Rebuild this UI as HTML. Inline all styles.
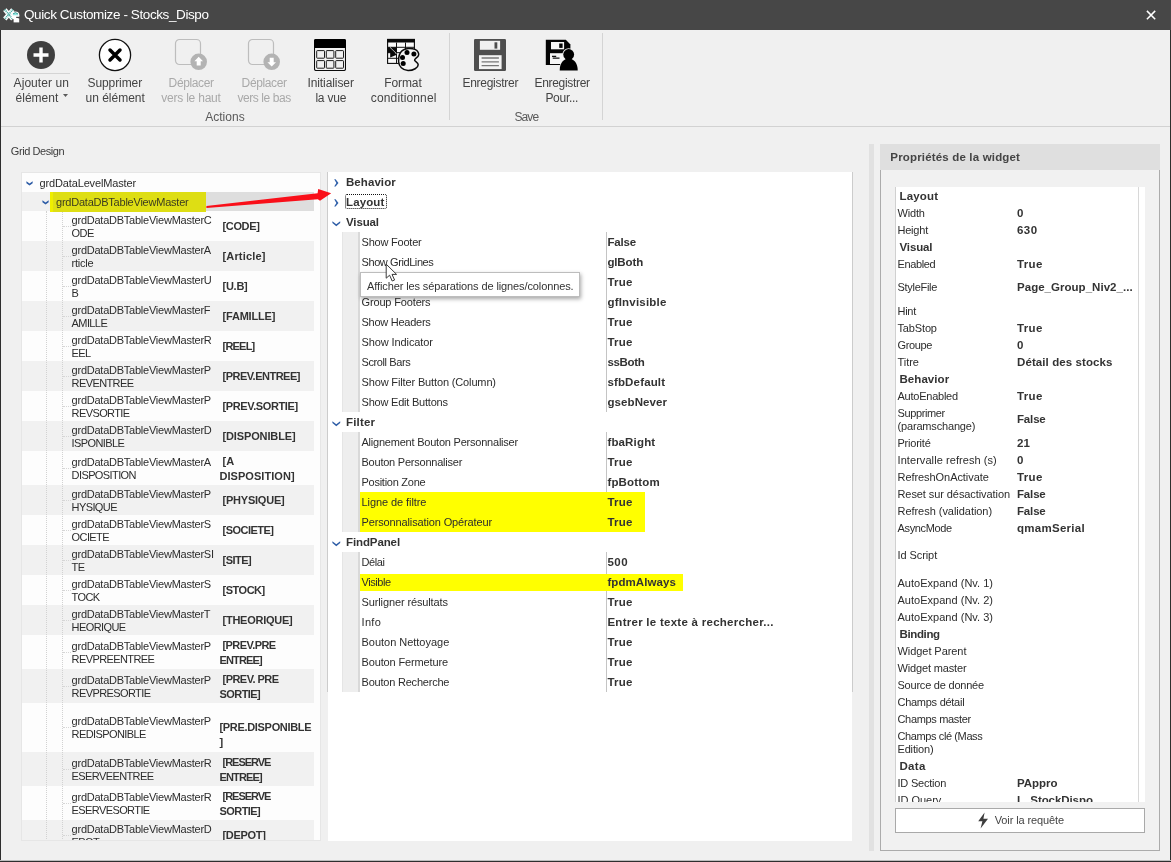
<!DOCTYPE html><html lang="fr"><head><meta charset="utf-8"><title>Quick Customize - Stocks_Dispo</title><style>
*{box-sizing:border-box}
html,body{margin:0;padding:0}
body{width:1171px;height:862px;overflow:hidden;background:#f0f0f0;position:relative;font-family:"Liberation Sans",sans-serif;font-size:11px;color:#2c2c2c}
#app{position:absolute;left:0;top:0;width:1171px;height:862px;will-change:transform}
.abs{position:absolute}
.t{position:absolute;white-space:nowrap;line-height:14px;letter-spacing:-0.2px}
.b{position:absolute;white-space:nowrap;line-height:14px;font-weight:bold;font-size:11.5px;letter-spacing:0.25px;color:#333}
.bu{position:absolute;white-space:nowrap;line-height:14px;font-weight:bold;font-size:11px;letter-spacing:-0.4px;color:#333}
.rb{position:absolute;white-space:nowrap;font-size:12px;line-height:15px;text-align:center;color:#444;transform:translateX(-50%)}
.rb.dis{color:#a9a9a9}
.rb2{position:absolute;white-space:nowrap;font-size:12px;line-height:15px}
.grp{position:absolute;white-space:nowrap;font-size:12px;line-height:15px;color:#5a5a5a;transform:translateX(-50%)}
</style></head><body><div id="app">
<div class="abs" style="left:0px;top:0px;width:1171px;height:30px;background:#474747"></div>
<div class="abs" style="left:24px;top:6px;font-size:13.5px;line-height:18px;letter-spacing:-0.4px;color:#fff;white-space:nowrap">Quick Customize - Stocks_Dispo</div>
<svg class="abs" style="left:2px;top:7px" width="18" height="16" viewBox="0 0 18 16">
<path d="M2.8 2.6 L10.8 12 M10.8 2.6 L2.8 12" stroke="#fff" stroke-width="4.4" fill="none"/>
<path d="M2.8 2.6 L10.8 12 M10.8 2.6 L2.8 12" stroke="#3aa59d" stroke-width="1.9" stroke-dasharray="0.9 0.9" fill="none"/>
<ellipse cx="13.4" cy="8.6" rx="4" ry="4" fill="#fff"/>
<path d="M10.6 8.2 Q13.4 3.6 16.4 8.2Z" fill="#8fe6e2"/>
<path d="M10.9 7 Q13.4 4.2 16 7" stroke="#2f9a92" stroke-width="1" fill="none"/>
<rect x="11.6" y="11.4" width="5.6" height="4" fill="#fff"/>
<rect x="14.2" y="9.8" width="3.4" height="1.2" fill="#474747"/>
</svg>
<svg class="abs" style="left:1145px;top:9px" width="12" height="12" viewBox="0 0 12 12"><path d="M1.9 1.9 L10.2 10.2 M10.2 1.9 L1.9 10.2" stroke="#fff" stroke-width="1.5" fill="none"/></svg>
<div class="abs" style="left:1px;top:126px;width:1169px;height:1px;background:#d2d2d2"></div>
<div class="abs" style="left:449px;top:33px;width:1px;height:87px;background:#d4d4d4"></div>
<div class="abs" style="left:602px;top:33px;width:1px;height:87px;background:#d4d4d4"></div>
<svg class="abs" style="left:26px;top:40px" width="30" height="30" viewBox="0 0 30 30"><circle cx="15" cy="15" r="14" fill="#3f3f3f"/><path d="M15 7.5V22.5M7.5 15H22.5" stroke="#fff" stroke-width="3.4"/></svg>
<div class="abs" style="left:11px;top:73px;width:59px;height:1px;background:#d4d4d4"></div>
<div class="rb2" style="left:13.6px;top:75.5px;letter-spacing:0.06px;color:#444">Ajouter un</div>
<div class="rb2" style="left:15.6px;top:91px;letter-spacing:0.00px;color:#444">élément</div>
<svg class="abs" style="left:62.5px;top:94px" width="5" height="3" viewBox="0 0 5 3"><path d="M0 0H5L2.5 3Z" fill="#5a5a5a"/></svg>
<svg class="abs" style="left:98px;top:38px" width="34" height="34" viewBox="0 0 34 34"><circle cx="17" cy="17" r="15.6" fill="#fff" stroke="#111" stroke-width="1.3"/><path d="M12 12L22 22M22 12L12 22" stroke="#000" stroke-width="3.5" stroke-linecap="round"/></svg>
<div class="rb2" style="left:87.5px;top:75.5px;letter-spacing:-0.09px;color:#444">Supprimer</div>
<div class="rb2" style="left:85.6px;top:91px;letter-spacing:-0.02px;color:#444">un élément</div>
<svg class="abs" style="left:174px;top:38px" width="36" height="34" viewBox="0 0 36 34"><rect x="1.5" y="1.5" width="25" height="25" rx="4" fill="#f0f0f0" stroke="#bdbdbd" stroke-width="1.2"/><circle cx="24.7" cy="23.8" r="8.3" fill="#b3b3b3"/><path d="M24.7 18.8 L29 23.2 H26.7 V27.6 H22.7 V23.2 H20.4Z" fill="#fff"/></svg>
<div class="rb2" style="left:168.6px;top:75.5px;letter-spacing:-0.37px;color:#a9a9a9">Déplacer</div>
<div class="rb2" style="left:161.2px;top:91px;letter-spacing:-0.21px;color:#a9a9a9">vers le haut</div>
<svg class="abs" style="left:247px;top:38px" width="36" height="34" viewBox="0 0 36 34"><rect x="1.5" y="1.5" width="25" height="25" rx="4" fill="#f0f0f0" stroke="#bdbdbd" stroke-width="1.2"/><circle cx="24.7" cy="23.8" r="8.3" fill="#b3b3b3"/><path d="M24.7 28.6 L29 24.2 H26.7 V19.8 H22.7 V24.2 H20.4Z" fill="#fff"/></svg>
<div class="rb2" style="left:241.6px;top:75.5px;letter-spacing:-0.37px;color:#a9a9a9">Déplacer</div>
<div class="rb2" style="left:237.4px;top:91px;letter-spacing:-0.41px;color:#a9a9a9">vers le bas</div>
<svg class="abs" style="left:314px;top:39px" width="32" height="32" viewBox="0 0 32 32"><rect x="0.5" y="0.5" width="31" height="31" rx="1.6" fill="#f4f4f4" stroke="#0a0a0a" stroke-width="1.1"/>
<path d="M0 2 Q0 0 2 0 H30 Q32 0 32 2 V9 H0Z" fill="#000"/>
<g fill="#f1f1f1" stroke="#1c1c1c" stroke-width="1"><rect x="2.7" y="11.6" width="7.8" height="7.6" rx="0.6"/><rect x="12.3" y="11.6" width="7.6" height="7.6" rx="0.6"/><rect x="21.7" y="11.6" width="7.8" height="7.6" rx="0.6"/><rect x="2.7" y="21.6" width="7.8" height="7.6" rx="0.6"/><rect x="12.3" y="21.6" width="7.6" height="7.6" rx="0.6"/><rect x="21.7" y="21.6" width="7.8" height="7.6" rx="0.6"/></g></svg>
<div class="rb2" style="left:307.4px;top:75.5px;letter-spacing:-0.08px;color:#444">Initialiser</div>
<div class="rb2" style="left:315.4px;top:91px;letter-spacing:-0.22px;color:#444">la vue</div>
<svg class="abs" style="left:386px;top:38px" width="36" height="34" viewBox="0 0 36 34">
<rect x="1.6" y="1.4" width="26.8" height="24" fill="#fafafa" stroke="#0a0a0a" stroke-width="1.1"/>
<rect x="1.1" y="0.9" width="27.8" height="3.6" rx="0.8" fill="#0a0a0a"/>
<path d="M1.6 9.3H28.4M1.6 14.7H28.4M1.6 20.3H28.4M10.5 4.5V25.4M19.5 4.5V25.4" stroke="#111" stroke-width="1"/>
<rect x="1.6" y="9.3" width="8.9" height="5.4" fill="#0a0a0a"/>
<path d="M4.2 10 L10.8 16.8 L4.2 19.4Z" fill="#0a0a0a"/>
<path d="M4 9.3 L10.5 15.6" stroke="#fff" stroke-width="0.7"/>
<path d="M16.2 12.6 C19 10.4 25 9.8 29 11.4 C32 12.8 33.4 15.6 32.4 17.6 C31.4 19.6 28.4 20.6 28.6 22.2 C28.8 23.8 32.2 24.4 32.2 26.8 C32.2 29.6 27.5 32.6 22 32.5 C16.5 32.4 12.8 28.5 12.6 23.5 C12.4 19 13.6 14.8 16.2 12.6Z" fill="#f3f3f3" stroke="#0a0a0a" stroke-width="1.5"/>
<circle cx="21" cy="14.6" r="2.5" fill="#000"/><circle cx="27.9" cy="16" r="2.5" fill="#000"/><circle cx="16.5" cy="19.5" r="2.5" fill="#000"/><circle cx="17.2" cy="25.6" r="2.5" fill="#000"/>
</svg>
<div class="rb2" style="left:384.2px;top:75.5px;letter-spacing:-0.08px;color:#444">Format</div>
<div class="rb2" style="left:370.8px;top:91px;letter-spacing:0.14px;color:#444">conditionnel</div>
<div class="rb2" style="left:205.2px;top:109.5px;letter-spacing:0.02px;color:#5a5a5a">Actions</div>
<svg class="abs" style="left:474px;top:39px" width="32" height="32" viewBox="0 0 32 32"><rect width="32" height="31.9" rx="1.2" fill="#4e4e4e"/><rect x="5.9" y="1.8" width="20.2" height="9" fill="#f1f1f1"/><rect x="20.5" y="3.3" width="2.8" height="6.3" fill="#4e4e4e"/><rect x="5" y="16.2" width="22.6" height="13.9" fill="#f4f4f4"/><path d="M7.6 19H24.9M7.6 22.9H24.9M7.6 26.6H24.9" stroke="#777" stroke-width="1.4"/></svg>
<div class="rb2" style="left:462.5px;top:75.5px;letter-spacing:-0.28px;color:#444">Enregistrer</div>
<svg class="abs" style="left:545px;top:39px" width="34" height="33" viewBox="0 0 34 33">
<path d="M0.8 0.8 H20.8 L25.4 5.5 V25.9 H0.8Z" fill="#050505"/>
<rect x="6" y="3" width="13.1" height="7.3" fill="#f6f6f6"/><rect x="14.2" y="4.5" width="3.4" height="4.4" fill="#050505"/>
<rect x="5" y="14.2" width="15" height="10.8" fill="#f6f6f6"/><path d="M7 17.4H11.2M7.7 19.1H14.5" stroke="#111" stroke-width="1.3"/>
<circle cx="23.7" cy="15.5" r="6.3" fill="#f0f0f0"/>
<path d="M13.6 32.5 C13.6 25.5 17.2 20 23.7 20 C30.2 20 33.8 25.5 33.8 32.5Z" fill="#f0f0f0"/>
<circle cx="23.7" cy="15.5" r="5.4" fill="#000"/>
<path d="M14.7 31.5 C14.7 24 18.5 19.8 23.7 19.8 C28.9 19.8 32.7 24 32.7 31.5Z" fill="#000"/><rect x="20.6" y="17" width="6.2" height="5" fill="#000"/>
</svg>
<div class="rb2" style="left:534.5px;top:75.5px;letter-spacing:-0.31px;color:#444">Enregistrer</div>
<div class="rb2" style="left:545.4px;top:91px;letter-spacing:-0.27px;color:#444">Pour...</div>
<div class="rb2" style="left:514.4px;top:109.5px;letter-spacing:-0.89px;color:#5a5a5a">Save</div>
<div class="t" style="left:10.8px;top:144px;letter-spacing:-0.43px;color:#3c3c3c">Grid Design</div>
<div class="abs" style="left:21px;top:172px;width:300px;height:669px;background:#fdfdfd;border:1px solid #e6e6e6"></div>
<div class="abs" style="left:22px;top:173px;width:298px;height:667px;overflow:hidden">
<div class="abs" style="left:0px;top:19px;width:292px;height:19px;background:#f0f0f0"></div>
<div class="abs" style="left:31px;top:19px;width:261px;height:19px;background:#dedede"></div>
<div class="abs" style="left:0px;top:68px;width:292px;height:30px;background:#f1f1f1"></div>
<div class="abs" style="left:0px;top:128px;width:292px;height:30px;background:#f1f1f1"></div>
<div class="abs" style="left:0px;top:188px;width:292px;height:30px;background:#f1f1f1"></div>
<div class="abs" style="left:0px;top:248px;width:292px;height:30px;background:#f1f1f1"></div>
<div class="abs" style="left:0px;top:312px;width:292px;height:30px;background:#f1f1f1"></div>
<div class="abs" style="left:0px;top:372px;width:292px;height:30px;background:#f1f1f1"></div>
<div class="abs" style="left:0px;top:432px;width:292px;height:30px;background:#f1f1f1"></div>
<div class="abs" style="left:0px;top:496px;width:292px;height:34px;background:#f1f1f1"></div>
<div class="abs" style="left:0px;top:579px;width:292px;height:34px;background:#f1f1f1"></div>
<div class="abs" style="left:0px;top:647px;width:292px;height:30px;background:#f1f1f1"></div>
<div class="abs" style="left:24px;top:38px;width:1px;height:640px;border-left:1px dotted #d2d2d2"></div>
<div class="abs" style="left:40px;top:38px;width:1px;height:640px;border-left:1px dotted #d2d2d2"></div>
<svg class="abs" style="left:4.300000000000001px;top:8.199999999999989px" width="7.4" height="4.8" viewBox="0 0 9 6"><path d="M0.4 0.4 L4.3 3.2 L8.2 0.4 V2.8 L4.3 5.6 L0.4 2.8Z" fill="#2d5ca6"/></svg>
<svg class="abs" style="left:20px;top:27.400000000000006px" width="7.4" height="4.8" viewBox="0 0 9 6"><path d="M0.4 0.4 L4.3 3.2 L8.2 0.4 V2.8 L4.3 5.6 L0.4 2.8Z" fill="#2d5ca6"/></svg>
<div class="t" style="left:17.5px;top:3px;letter-spacing:-0.14px;">grdDataLevelMaster</div>
<div class="abs" style="left:28px;top:19px;width:156px;height:19.5px;background:#dede14"></div>
<div class="abs" style="left:28px;top:19px;width:3px;height:19.5px;background:#eeee00"></div>
<div class="t" style="left:34px;top:22px;letter-spacing:-0.23px;color:#3c3c20">grdDataDBTableViewMaster</div>
<div class="abs" style="left:41px;top:53px;width:8px;height:1px;border-top:1px dotted #d6d6d6"></div>
<div class="t" style="left:49.599999999999994px;top:40px;letter-spacing:-0.24px">grdDataDBTableViewMasterC</div>
<div class="t" style="left:49.599999999999994px;top:52.5px;letter-spacing:-0.6px">ODE</div>
<div class="bu" style="left:200.5px;top:46px;letter-spacing:-0.35px;">[CODE]</div>
<div class="abs" style="left:41px;top:83px;width:8px;height:1px;border-top:1px dotted #d6d6d6"></div>
<div class="t" style="left:49.599999999999994px;top:70px;letter-spacing:-0.24px">grdDataDBTableViewMasterA</div>
<div class="t" style="left:49.599999999999994px;top:82.5px;letter-spacing:-0.24px">rticle</div>
<div class="bu" style="left:200.5px;top:76px;letter-spacing:0.16px;">[Article]</div>
<div class="abs" style="left:41px;top:113px;width:8px;height:1px;border-top:1px dotted #d6d6d6"></div>
<div class="t" style="left:49.599999999999994px;top:100px;letter-spacing:-0.24px">grdDataDBTableViewMasterU</div>
<div class="t" style="left:49.599999999999994px;top:112.5px;letter-spacing:-0.6px">B</div>
<div class="bu" style="left:200.5px;top:106px;letter-spacing:-0.25px;">[U.B]</div>
<div class="abs" style="left:41px;top:143px;width:8px;height:1px;border-top:1px dotted #d6d6d6"></div>
<div class="t" style="left:49.599999999999994px;top:130px;letter-spacing:-0.24px">grdDataDBTableViewMasterF</div>
<div class="t" style="left:49.599999999999994px;top:142.5px;letter-spacing:-0.6px">AMILLE</div>
<div class="bu" style="left:200.5px;top:136px;letter-spacing:-0.19px;">[FAMILLE]</div>
<div class="abs" style="left:41px;top:173px;width:8px;height:1px;border-top:1px dotted #d6d6d6"></div>
<div class="t" style="left:49.599999999999994px;top:160px;letter-spacing:-0.24px">grdDataDBTableViewMasterR</div>
<div class="t" style="left:49.599999999999994px;top:172.5px;letter-spacing:-0.6px">EEL</div>
<div class="bu" style="left:200.5px;top:166px;letter-spacing:-0.78px;">[REEL]</div>
<div class="abs" style="left:41px;top:203px;width:8px;height:1px;border-top:1px dotted #d6d6d6"></div>
<div class="t" style="left:49.599999999999994px;top:190px;letter-spacing:-0.24px">grdDataDBTableViewMasterP</div>
<div class="t" style="left:49.599999999999994px;top:202.5px;letter-spacing:-0.6px">REVENTREE</div>
<div class="bu" style="left:200.5px;top:196px;letter-spacing:-0.50px;">[PREV.ENTREE]</div>
<div class="abs" style="left:41px;top:233px;width:8px;height:1px;border-top:1px dotted #d6d6d6"></div>
<div class="t" style="left:49.599999999999994px;top:220px;letter-spacing:-0.24px">grdDataDBTableViewMasterP</div>
<div class="t" style="left:49.599999999999994px;top:232.5px;letter-spacing:-0.6px">REVSORTIE</div>
<div class="bu" style="left:200.5px;top:226px;letter-spacing:-0.39px;">[PREV.SORTIE]</div>
<div class="abs" style="left:41px;top:263px;width:8px;height:1px;border-top:1px dotted #d6d6d6"></div>
<div class="t" style="left:49.599999999999994px;top:250px;letter-spacing:-0.24px">grdDataDBTableViewMasterD</div>
<div class="t" style="left:49.599999999999994px;top:262.5px;letter-spacing:-0.6px">ISPONIBLE</div>
<div class="bu" style="left:200.5px;top:256px;letter-spacing:-0.13px;">[DISPONIBLE]</div>
<div class="abs" style="left:41px;top:295px;width:8px;height:1px;border-top:1px dotted #d6d6d6"></div>
<div class="t" style="left:49.599999999999994px;top:282px;letter-spacing:-0.24px">grdDataDBTableViewMasterA</div>
<div class="t" style="left:49.599999999999994px;top:294.5px;letter-spacing:-0.6px">DISPOSITION</div>
<div class="bu" style="left:200.5px;top:281px;letter-spacing:-0.00px;">[A</div>
<div class="bu" style="left:197.5px;top:296px;letter-spacing:0.05px;">DISPOSITION]</div>
<div class="abs" style="left:41px;top:327px;width:8px;height:1px;border-top:1px dotted #d6d6d6"></div>
<div class="t" style="left:49.599999999999994px;top:314px;letter-spacing:-0.24px">grdDataDBTableViewMasterP</div>
<div class="t" style="left:49.599999999999994px;top:326.5px;letter-spacing:-0.6px">HYSIQUE</div>
<div class="bu" style="left:200.5px;top:320px;letter-spacing:-0.22px;">[PHYSIQUE]</div>
<div class="abs" style="left:41px;top:357px;width:8px;height:1px;border-top:1px dotted #d6d6d6"></div>
<div class="t" style="left:49.599999999999994px;top:344px;letter-spacing:-0.24px">grdDataDBTableViewMasterS</div>
<div class="t" style="left:49.599999999999994px;top:356.5px;letter-spacing:-0.6px">OCIETE</div>
<div class="bu" style="left:200.5px;top:350px;letter-spacing:-0.51px;">[SOCIETE]</div>
<div class="abs" style="left:41px;top:387px;width:8px;height:1px;border-top:1px dotted #d6d6d6"></div>
<div class="t" style="left:49.599999999999994px;top:374px;letter-spacing:-0.24px">grdDataDBTableViewMasterSI</div>
<div class="t" style="left:49.599999999999994px;top:386.5px;letter-spacing:-0.6px">TE</div>
<div class="bu" style="left:200.5px;top:380px;letter-spacing:-0.50px;">[SITE]</div>
<div class="abs" style="left:41px;top:417px;width:8px;height:1px;border-top:1px dotted #d6d6d6"></div>
<div class="t" style="left:49.599999999999994px;top:404px;letter-spacing:-0.24px">grdDataDBTableViewMasterS</div>
<div class="t" style="left:49.599999999999994px;top:416.5px;letter-spacing:-0.6px">TOCK</div>
<div class="bu" style="left:200.5px;top:410px;letter-spacing:-0.48px;">[STOCK]</div>
<div class="abs" style="left:41px;top:447px;width:8px;height:1px;border-top:1px dotted #d6d6d6"></div>
<div class="t" style="left:49.599999999999994px;top:434px;letter-spacing:-0.24px">grdDataDBTableViewMasterT</div>
<div class="t" style="left:49.599999999999994px;top:446.5px;letter-spacing:-0.6px">HEORIQUE</div>
<div class="bu" style="left:200.5px;top:440px;letter-spacing:-0.25px;">[THEORIQUE]</div>
<div class="abs" style="left:41px;top:479px;width:8px;height:1px;border-top:1px dotted #d6d6d6"></div>
<div class="t" style="left:49.599999999999994px;top:466px;letter-spacing:-0.24px">grdDataDBTableViewMasterP</div>
<div class="t" style="left:49.599999999999994px;top:478.5px;letter-spacing:-0.6px">REVPREENTREE</div>
<div class="bu" style="left:200.5px;top:465px;letter-spacing:-0.58px;">[PREV.PRE</div>
<div class="bu" style="left:197.5px;top:480px;letter-spacing:-0.84px;">ENTREE]</div>
<div class="abs" style="left:41px;top:513px;width:8px;height:1px;border-top:1px dotted #d6d6d6"></div>
<div class="t" style="left:49.599999999999994px;top:500px;letter-spacing:-0.24px">grdDataDBTableViewMasterP</div>
<div class="t" style="left:49.599999999999994px;top:512.5px;letter-spacing:-0.6px">REVPRESORTIE</div>
<div class="bu" style="left:200.5px;top:499px;letter-spacing:-0.53px;">[PREV. PRE</div>
<div class="bu" style="left:197.5px;top:514px;letter-spacing:-0.57px;">SORTIE]</div>
<div class="abs" style="left:41px;top:554px;width:8px;height:1px;border-top:1px dotted #d6d6d6"></div>
<div class="t" style="left:49.599999999999994px;top:541px;letter-spacing:-0.24px">grdDataDBTableViewMasterP</div>
<div class="t" style="left:49.599999999999994px;top:553.5px;letter-spacing:-0.6px">REDISPONIBLE</div>
<div class="bu" style="left:197.5px;top:547px;letter-spacing:-0.32px;">[PRE.DISPONIBLE</div>
<div class="bu" style="left:197.5px;top:562px;letter-spacing:-0.26px;">]</div>
<div class="abs" style="left:41px;top:596px;width:8px;height:1px;border-top:1px dotted #d6d6d6"></div>
<div class="t" style="left:49.599999999999994px;top:583px;letter-spacing:-0.24px">grdDataDBTableViewMasterR</div>
<div class="t" style="left:49.599999999999994px;top:595.5px;letter-spacing:-0.6px">ESERVEENTREE</div>
<div class="bu" style="left:200.5px;top:582px;letter-spacing:-1.02px;">[RESERVE</div>
<div class="bu" style="left:197.5px;top:597px;letter-spacing:-0.84px;">ENTREE]</div>
<div class="abs" style="left:41px;top:630px;width:8px;height:1px;border-top:1px dotted #d6d6d6"></div>
<div class="t" style="left:49.599999999999994px;top:617px;letter-spacing:-0.24px">grdDataDBTableViewMasterR</div>
<div class="t" style="left:49.599999999999994px;top:629.5px;letter-spacing:-0.6px">ESERVESORTIE</div>
<div class="bu" style="left:200.5px;top:616px;letter-spacing:-1.02px;">[RESERVE</div>
<div class="bu" style="left:197.5px;top:631px;letter-spacing:-0.57px;">SORTIE]</div>
<div class="abs" style="left:41px;top:662px;width:8px;height:1px;border-top:1px dotted #d6d6d6"></div>
<div class="t" style="left:49.599999999999994px;top:649px;letter-spacing:-0.24px">grdDataDBTableViewMasterD</div>
<div class="t" style="left:49.599999999999994px;top:661.5px;letter-spacing:-0.6px">EPOT</div>
<div class="bu" style="left:200.5px;top:655px;letter-spacing:-0.32px;">[DEPOT]</div>
</div>
<div class="abs" style="left:328px;top:172px;width:524px;height:669px;background:#fff"></div>
<div class="abs" style="left:327px;top:172px;width:526px;height:520px;border-left:1px solid #cccccc;border-right:1px solid #cccccc"></div>
<svg class="abs" style="left:334.2px;top:178.9px" width="5.4" height="8.1" viewBox="0 0 6 9"><path d="M0.2 0.4 H1.8 L5 4.4 L1.8 8.4 H0.2 L2.6 4.4Z" fill="#3262ab"/></svg>
<div class="b" style="left:346px;top:175px;letter-spacing:0.07px;">Behavior</div>
<svg class="abs" style="left:334.2px;top:198.9px" width="5.4" height="8.1" viewBox="0 0 6 9"><path d="M0.2 0.4 H1.8 L5 4.4 L1.8 8.4 H0.2 L2.6 4.4Z" fill="#3262ab"/></svg>
<div class="b" style="left:346px;top:195px;letter-spacing:0.13px;">Layout</div>
<div class="abs" style="left:345px;top:194px;width:42px;height:15px;border:1px dotted #111;border-radius:2px"></div>
<svg class="abs" style="left:332px;top:221px" width="9" height="6" viewBox="0 0 9 6"><path d="M0.4 0.3 L4.3 3.2 L8.2 0.3 V2 L4.3 5.2 L0.4 2Z" fill="#2d5ca6"/></svg>
<div class="b" style="left:346px;top:215px;letter-spacing:-0.13px;">Visual</div>
<div class="abs" style="left:342px;top:232px;width:18px;height:20px;background:#eeeeee;border-left:1px solid #e5e5e5;border-right:2px solid #d9d9d9"></div>
<div class="abs" style="left:606px;top:232px;width:1px;height:20px;background:#c4c4c4"></div>
<div class="t" style="left:361.5px;top:235px;letter-spacing:-0.21px;">Show Footer</div>
<div class="b" style="left:607.4px;top:235px;letter-spacing:-0.14px;">False</div>
<div class="abs" style="left:342px;top:252px;width:18px;height:20px;background:#eeeeee;border-left:1px solid #e5e5e5;border-right:2px solid #d9d9d9"></div>
<div class="abs" style="left:606px;top:252px;width:1px;height:20px;background:#c4c4c4"></div>
<div class="t" style="left:361.5px;top:255px;letter-spacing:-0.41px;">Show GridLines</div>
<div class="b" style="left:607.4px;top:255px;letter-spacing:-0.12px;">glBoth</div>
<div class="abs" style="left:342px;top:272px;width:18px;height:20px;background:#eeeeee;border-left:1px solid #e5e5e5;border-right:2px solid #d9d9d9"></div>
<div class="abs" style="left:606px;top:272px;width:1px;height:20px;background:#c4c4c4"></div>
<div class="b" style="left:607.4px;top:275px;letter-spacing:0.28px;">True</div>
<div class="abs" style="left:342px;top:292px;width:18px;height:20px;background:#eeeeee;border-left:1px solid #e5e5e5;border-right:2px solid #d9d9d9"></div>
<div class="abs" style="left:606px;top:292px;width:1px;height:20px;background:#c4c4c4"></div>
<div class="t" style="left:361.5px;top:295px;letter-spacing:-0.15px;">Group Footers</div>
<div class="b" style="left:607.4px;top:295px;letter-spacing:0.21px;">gfInvisible</div>
<div class="abs" style="left:342px;top:312px;width:18px;height:20px;background:#eeeeee;border-left:1px solid #e5e5e5;border-right:2px solid #d9d9d9"></div>
<div class="abs" style="left:606px;top:312px;width:1px;height:20px;background:#c4c4c4"></div>
<div class="t" style="left:361.5px;top:315px;letter-spacing:-0.26px;">Show Headers</div>
<div class="b" style="left:607.4px;top:315px;letter-spacing:0.28px;">True</div>
<div class="abs" style="left:342px;top:332px;width:18px;height:20px;background:#eeeeee;border-left:1px solid #e5e5e5;border-right:2px solid #d9d9d9"></div>
<div class="abs" style="left:606px;top:332px;width:1px;height:20px;background:#c4c4c4"></div>
<div class="t" style="left:361.5px;top:335px;letter-spacing:-0.10px;">Show Indicator</div>
<div class="b" style="left:607.4px;top:335px;letter-spacing:0.28px;">True</div>
<div class="abs" style="left:342px;top:352px;width:18px;height:20px;background:#eeeeee;border-left:1px solid #e5e5e5;border-right:2px solid #d9d9d9"></div>
<div class="abs" style="left:606px;top:352px;width:1px;height:20px;background:#c4c4c4"></div>
<div class="t" style="left:361.5px;top:355px;letter-spacing:-0.39px;">Scroll Bars</div>
<div class="b" style="left:607.4px;top:355px;letter-spacing:-0.31px;">ssBoth</div>
<div class="abs" style="left:342px;top:372px;width:18px;height:20px;background:#eeeeee;border-left:1px solid #e5e5e5;border-right:2px solid #d9d9d9"></div>
<div class="abs" style="left:606px;top:372px;width:1px;height:20px;background:#c4c4c4"></div>
<div class="t" style="left:361.5px;top:375px;letter-spacing:-0.14px;">Show Filter Button (Column)</div>
<div class="b" style="left:607.4px;top:375px;letter-spacing:0.16px;">sfbDefault</div>
<div class="abs" style="left:342px;top:392px;width:18px;height:20px;background:#eeeeee;border-left:1px solid #e5e5e5;border-right:2px solid #d9d9d9"></div>
<div class="abs" style="left:606px;top:392px;width:1px;height:20px;background:#c4c4c4"></div>
<div class="t" style="left:361.5px;top:395px;letter-spacing:-0.21px;">Show Edit Buttons</div>
<div class="b" style="left:607.4px;top:395px;letter-spacing:0.10px;">gsebNever</div>
<svg class="abs" style="left:332px;top:421px" width="9" height="6" viewBox="0 0 9 6"><path d="M0.4 0.3 L4.3 3.2 L8.2 0.3 V2 L4.3 5.2 L0.4 2Z" fill="#2d5ca6"/></svg>
<div class="b" style="left:346px;top:415px;letter-spacing:0.16px;">Filter</div>
<div class="abs" style="left:342px;top:432px;width:18px;height:20px;background:#eeeeee;border-left:1px solid #e5e5e5;border-right:2px solid #d9d9d9"></div>
<div class="abs" style="left:606px;top:432px;width:1px;height:20px;background:#c4c4c4"></div>
<div class="t" style="left:361.5px;top:435px;letter-spacing:-0.22px;">Alignement Bouton Personnaliser</div>
<div class="b" style="left:607.4px;top:435px;letter-spacing:0.16px;">fbaRight</div>
<div class="abs" style="left:342px;top:452px;width:18px;height:20px;background:#eeeeee;border-left:1px solid #e5e5e5;border-right:2px solid #d9d9d9"></div>
<div class="abs" style="left:606px;top:452px;width:1px;height:20px;background:#c4c4c4"></div>
<div class="t" style="left:361.5px;top:455px;letter-spacing:-0.23px;">Bouton Personnaliser</div>
<div class="b" style="left:607.4px;top:455px;letter-spacing:0.28px;">True</div>
<div class="abs" style="left:342px;top:472px;width:18px;height:20px;background:#eeeeee;border-left:1px solid #e5e5e5;border-right:2px solid #d9d9d9"></div>
<div class="abs" style="left:606px;top:472px;width:1px;height:20px;background:#c4c4c4"></div>
<div class="t" style="left:361.5px;top:475px;letter-spacing:-0.26px;">Position Zone</div>
<div class="b" style="left:607.4px;top:475px;letter-spacing:0.19px;">fpBottom</div>
<div class="abs" style="left:342px;top:492px;width:18px;height:20px;background:#eeeeee;border-left:1px solid #e5e5e5;border-right:2px solid #d9d9d9"></div>
<div class="abs" style="left:606px;top:492px;width:1px;height:20px;background:#c4c4c4"></div>
<div class="abs" style="left:360px;top:492px;width:285px;height:20px;background:#ffff00"></div>
<div class="t" style="left:361.5px;top:495px;letter-spacing:-0.08px;">Ligne de filtre</div>
<div class="b" style="left:607.4px;top:495px;letter-spacing:0.28px;">True</div>
<div class="abs" style="left:342px;top:512px;width:18px;height:20px;background:#eeeeee;border-left:1px solid #e5e5e5;border-right:2px solid #d9d9d9"></div>
<div class="abs" style="left:606px;top:512px;width:1px;height:20px;background:#c4c4c4"></div>
<div class="abs" style="left:360px;top:512px;width:285px;height:20px;background:#ffff00"></div>
<div class="t" style="left:361.5px;top:515px;letter-spacing:-0.13px;">Personnalisation Opérateur</div>
<div class="b" style="left:607.4px;top:515px;letter-spacing:0.28px;">True</div>
<svg class="abs" style="left:332px;top:541px" width="9" height="6" viewBox="0 0 9 6"><path d="M0.4 0.3 L4.3 3.2 L8.2 0.3 V2 L4.3 5.2 L0.4 2Z" fill="#2d5ca6"/></svg>
<div class="b" style="left:346px;top:535px;letter-spacing:-0.11px;">FindPanel</div>
<div class="abs" style="left:342px;top:552px;width:18px;height:20px;background:#eeeeee;border-left:1px solid #e5e5e5;border-right:2px solid #d9d9d9"></div>
<div class="abs" style="left:606px;top:552px;width:1px;height:20px;background:#c4c4c4"></div>
<div class="t" style="left:361.5px;top:555px;letter-spacing:-0.41px;">Délai</div>
<div class="b" style="left:607.4px;top:555px;letter-spacing:0.50px;">500</div>
<div class="abs" style="left:342px;top:572px;width:18px;height:20px;background:#eeeeee;border-left:1px solid #e5e5e5;border-right:2px solid #d9d9d9"></div>
<div class="abs" style="left:606px;top:572px;width:1px;height:20px;background:#c4c4c4"></div>
<div class="abs" style="left:360px;top:574px;width:323px;height:17px;background:#ffff00"></div>
<div class="t" style="left:361.5px;top:575px;letter-spacing:-0.44px;">Visible</div>
<div class="b" style="left:607.4px;top:575px;letter-spacing:0.09px;">fpdmAlways</div>
<div class="abs" style="left:342px;top:592px;width:18px;height:20px;background:#eeeeee;border-left:1px solid #e5e5e5;border-right:2px solid #d9d9d9"></div>
<div class="abs" style="left:606px;top:592px;width:1px;height:20px;background:#c4c4c4"></div>
<div class="t" style="left:361.5px;top:595px;letter-spacing:-0.12px;">Surligner résultats</div>
<div class="b" style="left:607.4px;top:595px;letter-spacing:0.28px;">True</div>
<div class="abs" style="left:342px;top:612px;width:18px;height:20px;background:#eeeeee;border-left:1px solid #e5e5e5;border-right:2px solid #d9d9d9"></div>
<div class="abs" style="left:606px;top:612px;width:1px;height:20px;background:#c4c4c4"></div>
<div class="t" style="left:361.5px;top:615px;letter-spacing:0.34px;">Info</div>
<div class="b" style="left:607.4px;top:615px;letter-spacing:0.27px;">Entrer le texte à rechercher...</div>
<div class="abs" style="left:342px;top:632px;width:18px;height:20px;background:#eeeeee;border-left:1px solid #e5e5e5;border-right:2px solid #d9d9d9"></div>
<div class="abs" style="left:606px;top:632px;width:1px;height:20px;background:#c4c4c4"></div>
<div class="t" style="left:361.5px;top:635px;letter-spacing:-0.02px;">Bouton Nettoyage</div>
<div class="b" style="left:607.4px;top:635px;letter-spacing:0.28px;">True</div>
<div class="abs" style="left:342px;top:652px;width:18px;height:20px;background:#eeeeee;border-left:1px solid #e5e5e5;border-right:2px solid #d9d9d9"></div>
<div class="abs" style="left:606px;top:652px;width:1px;height:20px;background:#c4c4c4"></div>
<div class="t" style="left:361.5px;top:655px;letter-spacing:-0.14px;">Bouton Fermeture</div>
<div class="b" style="left:607.4px;top:655px;letter-spacing:0.28px;">True</div>
<div class="abs" style="left:342px;top:672px;width:18px;height:20px;background:#eeeeee;border-left:1px solid #e5e5e5;border-right:2px solid #d9d9d9"></div>
<div class="abs" style="left:606px;top:672px;width:1px;height:20px;background:#c4c4c4"></div>
<div class="t" style="left:361.5px;top:675px;letter-spacing:-0.21px;">Bouton Recherche</div>
<div class="b" style="left:607.4px;top:675px;letter-spacing:0.28px;">True</div>
<div class="abs" style="left:360px;top:272px;width:220px;height:25px;background:#fff;border:1px solid #bdbdbd;box-shadow:1px 2px 4px rgba(0,0,0,.35)"></div>
<div class="t" style="left:367px;top:279px;letter-spacing:-0.11px;color:#333">Afficher les séparations de lignes/colonnes.</div>
<svg class="abs" style="left:385px;top:263px" width="14" height="20" viewBox="0 0 14 20"><path d="M1.2 1.2 V15.2 L4.6 12.2 L7.2 18 L9.6 17 L7 11.4 H11.6Z" fill="#fff" stroke="#3a3a3a" stroke-width="1"/></svg>
<svg class="abs" style="left:200px;top:184px" width="140" height="30" viewBox="0 0 140 30"><path d="M6.4 22.1 L117.6 9.2 L118.2 5 L131.2 9.3 L120 16.8 L117.8 15.3 L6.4 23.9Z" fill="#f90f19"/></svg>
<div class="abs" style="left:869px;top:144px;width:5px;height:707px;background:#e1e1e1"></div>
<div class="abs" style="left:880px;top:169px;width:280px;height:682px;border:1px solid #ababab;background:#f1f1f1"></div>
<div class="abs" style="left:880px;top:144px;width:280px;height:26px;background:#dfdfdf"></div>
<div class="b" style="left:890.3px;top:150px;letter-spacing:0.17px;color:#444">Propriétés de la widget</div>
<div class="abs" style="left:896px;top:187px;width:249px;height:615px;background:#fff"></div>
<div class="abs" style="left:895px;top:187px;width:244px;height:615px;border-left:1px solid #d0d0d0;border-right:1px solid #d8d8d8"></div>
<div class="abs" style="left:896px;top:188px;width:242px;height:614px;overflow:hidden">
<div class="b" style="left:3.5px;top:1px;letter-spacing:0.17px;">Layout</div>
<div class="t" style="left:1.5px;top:18px;letter-spacing:-0.16px;">Width</div>
<div class="b" style="left:121px;top:18px;letter-spacing:0.40px;">0</div>
<div class="t" style="left:1.5px;top:35px;letter-spacing:-0.22px;">Height</div>
<div class="b" style="left:121px;top:35px;letter-spacing:0.44px;">630</div>
<div class="b" style="left:3.5px;top:52px;letter-spacing:-0.14px;">Visual</div>
<div class="t" style="left:1.5px;top:69px;letter-spacing:-0.38px;">Enabled</div>
<div class="b" style="left:121px;top:69px;letter-spacing:0.35px;">True</div>
<div class="t" style="left:1.5px;top:92px;letter-spacing:-0.29px;">StyleFile</div>
<div class="b" style="left:121px;top:92px;letter-spacing:0.03px;">Page_Group_Niv2_...</div>
<div class="t" style="left:1.5px;top:116px;letter-spacing:-0.27px;">Hint</div>
<div class="t" style="left:1.5px;top:133px;letter-spacing:-0.15px;">TabStop</div>
<div class="b" style="left:121px;top:133px;letter-spacing:0.35px;">True</div>
<div class="t" style="left:1.5px;top:150px;letter-spacing:-0.38px;">Groupe</div>
<div class="b" style="left:121px;top:150px;letter-spacing:0.40px;">0</div>
<div class="t" style="left:1.5px;top:167px;letter-spacing:-0.04px;">Titre</div>
<div class="b" style="left:121px;top:167px;letter-spacing:0.09px;">Détail des stocks</div>
<div class="b" style="left:3.5px;top:184px;letter-spacing:0.06px;">Behavior</div>
<div class="t" style="left:1.5px;top:201px;letter-spacing:-0.24px;">AutoEnabled</div>
<div class="b" style="left:121px;top:201px;letter-spacing:0.35px;">True</div>
<div class="t" style="left:1.5px;top:218px;letter-spacing:-0.37px;">Supprimer</div>
<div class="t" style="left:1.5px;top:231px;letter-spacing:-0.17px;">(paramschange)</div>
<div class="b" style="left:121px;top:224px;letter-spacing:-0.16px;">False</div>
<div class="t" style="left:1.5px;top:248px;letter-spacing:-0.22px;">Priorité</div>
<div class="b" style="left:121px;top:248px;letter-spacing:0.10px;">21</div>
<div class="t" style="left:1.5px;top:265px;letter-spacing:0.07px;">Intervalle refresh (s)</div>
<div class="b" style="left:121px;top:265px;letter-spacing:0.40px;">0</div>
<div class="t" style="left:1.5px;top:282px;letter-spacing:-0.06px;">RefreshOnActivate</div>
<div class="b" style="left:121px;top:282px;letter-spacing:0.35px;">True</div>
<div class="t" style="left:1.5px;top:299px;letter-spacing:-0.08px;">Reset sur désactivation</div>
<div class="b" style="left:121px;top:299px;letter-spacing:-0.16px;">False</div>
<div class="t" style="left:1.5px;top:316px;letter-spacing:-0.04px;">Refresh (validation)</div>
<div class="b" style="left:121px;top:316px;letter-spacing:-0.16px;">False</div>
<div class="t" style="left:1.5px;top:333px;letter-spacing:-0.35px;">AsyncMode</div>
<div class="b" style="left:121px;top:333px;letter-spacing:0.27px;">qmamSerial</div>
<div class="t" style="left:1.5px;top:360px;letter-spacing:-0.08px;">Id Script</div>
<div class="t" style="left:1.5px;top:388px;letter-spacing:0.02px;">AutoExpand (Nv. 1)</div>
<div class="t" style="left:1.5px;top:405px;letter-spacing:0.02px;">AutoExpand (Nv. 2)</div>
<div class="t" style="left:1.5px;top:422px;letter-spacing:0.02px;">AutoExpand (Nv. 3)</div>
<div class="b" style="left:3.5px;top:439px;letter-spacing:-0.36px;">Binding</div>
<div class="t" style="left:1.5px;top:456px;letter-spacing:-0.06px;">Widget Parent</div>
<div class="t" style="left:1.5px;top:473px;letter-spacing:-0.15px;">Widget master</div>
<div class="t" style="left:1.5px;top:490px;letter-spacing:-0.22px;">Source de donnée</div>
<div class="t" style="left:1.5px;top:507px;letter-spacing:-0.27px;">Champs détail</div>
<div class="t" style="left:1.5px;top:524px;letter-spacing:-0.33px;">Champs master</div>
<div class="t" style="left:1.5px;top:541px;letter-spacing:-0.39px;">Champs clé (Mass</div>
<div class="t" style="left:1.5px;top:554px;letter-spacing:-0.17px;">Edition)</div>
<div class="b" style="left:3.5px;top:571px;letter-spacing:0.29px;">Data</div>
<div class="t" style="left:1.5px;top:588px;letter-spacing:-0.21px;">ID Section</div>
<div class="b" style="left:121px;top:588px;letter-spacing:-0.05px;">PAppro</div>
<div class="t" style="left:1.5px;top:605px;letter-spacing:-0.03px;">ID Query</div>
<div class="b" style="left:121px;top:605px;letter-spacing:-0.07px;">L_StockDispo</div>
</div>
<div class="abs" style="left:895px;top:808px;width:250px;height:25px;background:#fff;border:1px solid #a9a9a9"></div>
<svg class="abs" style="left:977px;top:812px" width="12" height="17" viewBox="0 0 12 17"><path d="M7.6 0.5 L1.2 9.3 H5.4 L3.6 16.5 L11 6.8 H6.4Z" fill="#3d3d3d"/></svg>
<div class="t" style="left:994.7px;top:813px;letter-spacing:-0.11px;color:#444">Voir la requête</div>
<div class="abs" style="left:0px;top:30px;width:1px;height:832px;background:#2e2e2e"></div>
<div class="abs" style="left:1170px;top:30px;width:1px;height:832px;background:#2e2e2e"></div>
<div class="abs" style="left:0px;top:861px;width:1171px;height:1px;background:#2e2e2e"></div>
<div class="abs" style="left:0px;top:860px;width:1171px;height:1px;background:#bdbdbd"></div>
</div></body></html>
